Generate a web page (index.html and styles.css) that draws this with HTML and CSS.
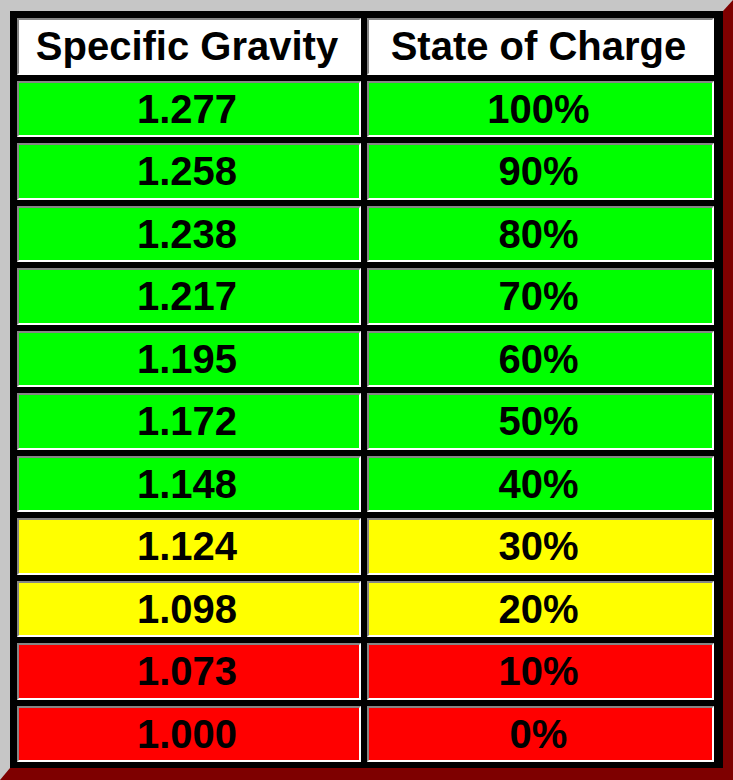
FILE: index.html
```html
<!DOCTYPE html>
<html>
<head>
<meta charset="utf-8">
<link rel="stylesheet" href="styles.css">
</head>
<body>
<div class="chart">
  <div class="cell head">Specific Gravity</div>
  <div class="cell head">State of Charge</div>
  <div class="cell green">1.277</div><div class="cell green">100%</div>
  <div class="cell green">1.258</div><div class="cell green">90%</div>
  <div class="cell green">1.238</div><div class="cell green">80%</div>
  <div class="cell green">1.217</div><div class="cell green">70%</div>
  <div class="cell green">1.195</div><div class="cell green">60%</div>
  <div class="cell green">1.172</div><div class="cell green">50%</div>
  <div class="cell green">1.148</div><div class="cell green">40%</div>
  <div class="cell yellow">1.124</div><div class="cell yellow">30%</div>
  <div class="cell yellow">1.098</div><div class="cell yellow">20%</div>
  <div class="cell red">1.073</div><div class="cell red">10%</div>
  <div class="cell red">1.000</div><div class="cell red">0%</div>
</div>
</body>
</html>
```
FILE: styles.css
```css
html, body {
  margin: 0;
  padding: 0;
  background: #ffffff;
}
.chart {
  box-sizing: border-box;
  width: 733px;
  height: 780px;
  background: #000000;
  border-style: solid;
  border-width: 11px 10px 12px 10px;
  border-color: #c6c6c6 #7e0000 #7e0000 #c6c6c6;
  padding: 7px 9px 6px 7px;
  display: grid;
  grid-template-columns: 344px 1fr;
  grid-template-rows: repeat(12, 1fr);
  gap: 6px;
  font-family: "Liberation Sans", Arial, sans-serif;
  font-weight: bold;
  font-size: 40px;
  color: #000000;
}
.cell {
  box-sizing: border-box;
  display: flex;
  align-items: center;
  justify-content: center;
  border-style: solid;
  border-width: 2px;
  border-color: #868686 #ffffff #ffffff #868686;
  padding-right: 4px;
  padding-top: 1px;
}
.head {
  background: #ffffff;
}
.green {
  background: #00ff00;
}
.yellow {
  background: #ffff00;
}
.red {
  background: #ff0000;
}
```
